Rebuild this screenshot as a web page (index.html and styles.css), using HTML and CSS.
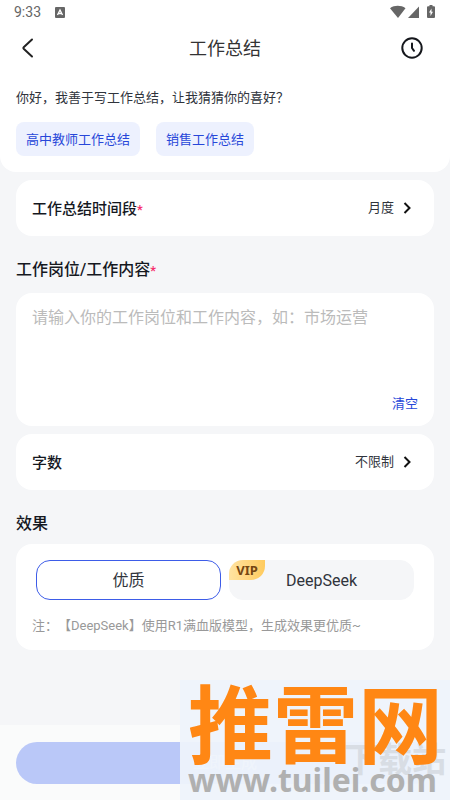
FILE: index.html
```html
<!DOCTYPE html>
<html lang="zh-CN">
<head>
<meta charset="utf-8">
<meta name="viewport" content="width=device-width, initial-scale=1">
<title>工作总结</title>
<link rel="stylesheet" href="styles.css">
</head>
<body>
<header class="top">
  <div class="status">
    <span class="time">9:33</span>
    <svg class="app-icon" width="10" height="11" viewBox="0 0 10 11"><rect width="10" height="11" rx="1" fill="#666"/><path d="M2.500 8 5 3l2.500 5M3.500 6.500h3" fill="none" stroke="#fff" stroke-width="1.300"/></svg>
    <svg class="signals" width="46" height="14" viewBox="0 0 46 14">
      <g fill="#666"><path d="M0 3.200C4.500 0 11 0 15.500 3.200L8 13Z"/><path d="M29 1.500V13H18Z"/><path d="M39.500 1.200V0h3v1.200H44q1 0 1 1V12q0 1-1 1h-6q-1 0-1-1V2.200q0-1 1-1Z"/></g>
      <path d="M41.500 3.500 39 7.500h1.500V11L43 6.800h-1.500Z" fill="#fff"/>
    </svg>
  </div>
  <nav class="nav">
    <button class="icon-btn" aria-label="返回"><svg width="24" height="24" viewBox="0 0 24 24"><path d="M16 3.500 7.700 11.200q-.8.800 0 1.600L16 20.500" fill="none" stroke="#222" stroke-width="2" stroke-linecap="round"/></svg></button>
    <h1 class="title">工作总结</h1>
    <button class="icon-btn history" aria-label="历史记录"><svg width="24" height="24" viewBox="0 0 24 24"><circle cx="12" cy="12" r="9.700" fill="none" stroke="#15171c" stroke-width="2"/><path d="M12 7.500V12l2 2.800" fill="none" stroke="#15171c" stroke-width="2" stroke-linecap="round" stroke-linejoin="round"/></svg></button>
  </nav>
  <p class="greeting">你好，我善于写工作总结，让我猜猜你的喜好？</p>
  <div class="chips">
    <button class="chip">高中教师工作总结</button>
    <button class="chip">销售工作总结</button>
  </div>
</header>
<main class="form">
  <button class="card row">
    <span class="label">工作总结时间段<span class="required">*</span></span>
    <span class="value">月度</span>
    <svg width="10" height="14" viewBox="0 0 10 14"><path d="m2.500 2 5 5-5 5" fill="none" stroke="#111" stroke-width="2"/></svg>
  </button>
  <label class="heading" for="content">工作岗位/工作内容<span class="required">*</span></label>
  <div class="card content-card">
    <textarea class="content" id="content" placeholder="请输入你的工作岗位和工作内容，如：市场运营"></textarea>
    <button class="clear">清空</button>
  </div>
  <button class="card row">
    <span class="label">字数</span>
    <span class="value">不限制</span>
    <svg width="10" height="14" viewBox="0 0 10 14"><path d="m2.500 2 5 5-5 5" fill="none" stroke="#111" stroke-width="2"/></svg>
  </button>
  <h2 class="heading">效果</h2>
  <section class="card effect">
    <div class="options">
      <button class="option selected">优质</button>
      <button class="option">DeepSeek<span class="vip">VIP</span></button>
    </div>
    <p class="note">注：【DeepSeek】使用R1满血版模型，生成效果更优质~</p>
  </section>
</main>
<footer class="footer"><button class="submit">立即生成</button></footer>
<aside class="watermark">
  <span class="ghost">下载站</span>
  <span class="site">推雷网</span>
  <span class="url">www.tuilei.com</span>
</aside>
</body>
</html>
```

FILE: styles.css
```css
* { box-sizing: border-box; }
body {
  position: relative;
  display: flex;
  flex-direction: column;
  min-height: 100vh;
  margin: 0;
  background: #f5f6f8;
  color: #30343c;
  font-family: Roboto, "Noto Sans CJK SC", sans-serif;
  font-size: 13px;
  line-height: 20px;
  text-spacing-trim: space-all;
}
button {
  border: 0;
  padding: 0;
  background: none;
  color: inherit;
  font: inherit;
}
h1, h2, p { margin: 0; }
svg { display: block; flex: none; }
.top {
  padding-bottom: 16px;
  border-radius: 0 0 16px 16px;
  background: #fff;
}
.status {
  display: flex;
  align-items: center;
  height: 24px;
  padding: 0 14px;
  color: #666;
  font-size: 14px;
}
.app-icon { margin-left: 14px; }
.signals { margin-left: auto; }
.nav {
  display: grid;
  grid-template-columns: 1fr auto 1fr;
  align-items: center;
  height: 48px;
  padding: 0 16px;
}
.history {
  justify-self: end;
  margin-right: 10px;
}
.title {
  padding-top: 2px;
  color: #333;
  font-size: 18px;
  font-weight: 400;
}
.greeting { padding: 16px 16px 14px; }
.chips {
  display: flex;
  gap: 16px;
  padding: 0 16px;
}
.chip {
  height: 34px;
  padding: 2px 10px 0;
  border-radius: 8px;
  background: #edf1fe;
  color: #2747d9;
}
.form {
  display: flex;
  flex: 1;
  flex-direction: column;
  padding: 8px 16px;
}
.card {
  border-radius: 16px;
  background: #fff;
}
.row {
  display: flex;
  align-items: center;
  height: 56px;
  padding: 0 22px 0 16px;
  text-align: left;
}
.label {
  flex: 1;
  padding-top: 1px;
  color: #15181f;
  font-size: 15px;
  font-weight: 500;
}
.required {
  color: #f52c6b;
  font-size: 13px;
  line-height: 1;
}
.value { margin-right: 8px; }
.heading {
  padding: 24px 0 10px;
  color: #15181f;
  font-size: 16px;
  font-weight: 500;
}
.content-card {
  display: flex;
  flex-direction: column;
  margin: 3px 0 8px;
  padding: 13px 16px 12px;
}
.content {
  height: 88px;
  border: 0;
  padding: 0;
  outline: 0;
  resize: none;
  background: none;
  color: inherit;
  font: inherit;
  font-size: 16px;
  line-height: 24px;
}
.content::placeholder { color: #bbb; }
.clear {
  align-self: flex-end;
  color: #2747d9;
}
.effect { padding: 16px 16px 14px; }
.options {
  display: flex;
  gap: 8px;
  padding: 0 4px;
}
.option {
  position: relative;
  flex: 1;
  height: 40px;
  padding-top: 2px;
  border: 1px solid #f5f6f8;
  border-radius: 14px;
  background: #f5f6f8;
  font-size: 16px;
}
.selected {
  border-color: #3d5ce8;
  background: #fff;
}
.vip {
  position: absolute;
  top: -1px;
  left: -1px;
  width: 36px;
  border-radius: 14px 0 14px 0;
  background: linear-gradient(90deg, #ffe3a2, #ffcb5e);
  color: #754713;
  font-family: "Noto Sans", sans-serif;
  font-size: 13px;
  font-weight: 700;
}
.note {
  padding-top: 16px;
  color: #999;
}
.footer {
  display: flex;
  padding: 17px 16px 16px;
  background: #fafbfb;
}
.submit {
  flex: 1;
  height: 42px;
  border-radius: 21px;
  background: #bac8f8;
  color: #fff;
  font-size: 16px;
}
.watermark {
  position: absolute;
  right: 0;
  bottom: 0;
  display: flex;
  flex-direction: column;
  width: 270px;
  height: 120px;
  padding-left: 8px;
  background: rgba(238, 243, 251, 0.94);
  font-weight: 700;
  white-space: nowrap;
}
.site {
  color: #ff8714;
  font-family: "Noto Sans CJK SC", sans-serif;
  font-size: 85px;
  line-height: 80px;
}
.url {
  color: #b0b0b0;
  font-family: "Noto Sans", sans-serif;
  font-size: 32px;
  line-height: 40px;
}
.ghost {
  position: absolute;
  right: 4px;
  bottom: 20px;
  color: #d8dde4;
  font-size: 34px;
  line-height: 40px;
}
.site, .url { position: relative; }
```
